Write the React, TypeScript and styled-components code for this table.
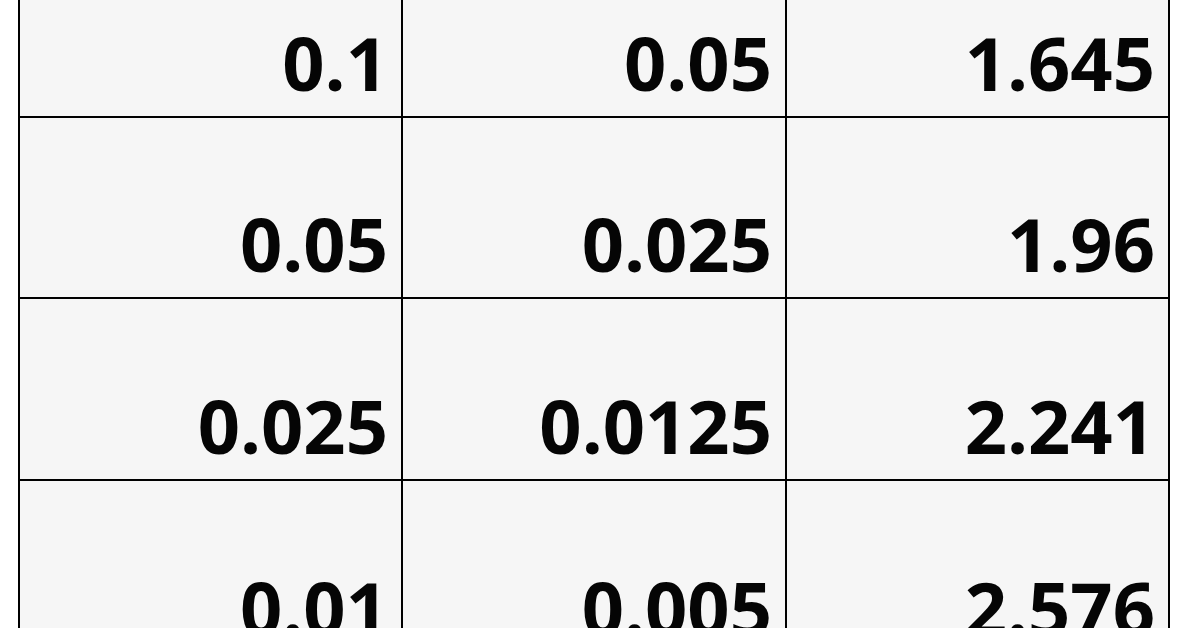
import styled, { createGlobalStyle } from 'styled-components';

const GlobalStyle = createGlobalStyle`
  html, body {
    margin: 0;
    padding: 0;
    background: #ffffff;
    overflow: hidden;
  }
`;

const Page = styled.div`
  width: 1196px;
  height: 628px;
  overflow: hidden;
  background: #ffffff;
`;

const Table = styled.div`
  display: grid;
  grid-template-columns: 383px 384px 383px;
  grid-template-rows: 118px 181px 182px 182px;
  margin-left: 18px;
  width: max-content;
  border-left: 2px solid #000;
`;

const Cell = styled.div`
  display: flex;
  align-items: flex-end;
  justify-content: flex-end;
  padding: 0 13px 16px 0;
  background: #f6f6f6;
  border-right: 2px solid #000;
  border-bottom: 2px solid #000;
  font-family: 'Open Sans', 'Noto Sans', sans-serif;
  font-weight: 700;
  font-size: 74px;
  line-height: 1;
  color: #050505;
`;

const rows = [
  ['0.1', '0.05', '1.645'],
  ['0.05', '0.025', '1.96'],
  ['0.025', '0.0125', '2.241'],
  ['0.01', '0.005', '2.576'],
];

export default function App() {
  return (
    <Page>
      <GlobalStyle />
      <Table>
        {rows.map((row, i) =>
          row.map((value, j) => <Cell key={`${i}-${j}`}>{value}</Cell>)
        )}
      </Table>
    </Page>
  );
}
